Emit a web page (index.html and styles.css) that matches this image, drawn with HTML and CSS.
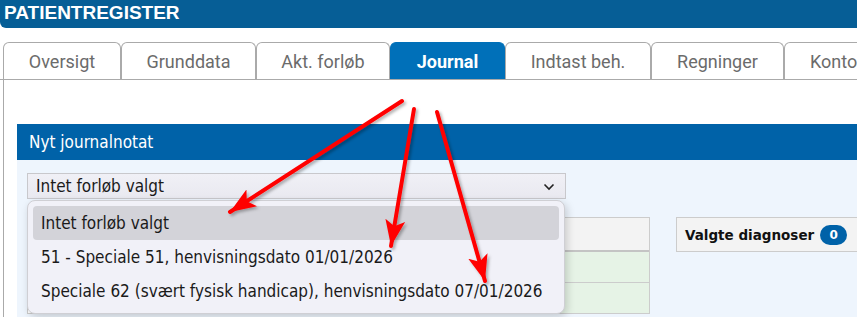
FILE: index.html
```html
<!DOCTYPE html>
<html lang="da">

<head>
    <meta charset="UTF-8">
    <meta name="viewport" content="width=device-width, initial-scale=1.0">
    <title>Patientregister</title>
    <link rel="stylesheet" href="styles.css">
</head>

<body>
    <header class="topbar">PATIENTREGISTER</header>

    <nav class="tabs">
        <div class="tab tab-oversigt">Oversigt</div>
        <div class="tab tab-grunddata">Grunddata</div>
        <div class="tab tab-forloeb">Akt. forløb</div>
        <div class="tab tab-journal active">Journal</div>
        <div class="tab tab-indtast">Indtast beh.</div>
        <div class="tab tab-regninger">Regninger</div>
        <div class="tab tab-konto">Konto</div>
    </nav>

    <main class="content">
        <section class="panel">
            <div class="panel-head">Nyt journalnotat</div>
            <div class="panel-body">
                <div class="select-wrap">
                    <div class="select">
                        <span>Intet forløb valgt</span>
                        <svg class="chevron" width="12" height="8" viewBox="0 0 12 8">
                            <path d="M1.5 1.5 L6 6 L10.5 1.5" fill="none" stroke="#222" stroke-width="1.6" />
                        </svg>
                    </div>
                    <ul class="options">
                        <li class="selected">Intet forløb valgt</li>
                        <li>51 - Speciale 51, henvisningsdato 01/01/2026</li>
                        <li>Speciale 62 (svært fysisk handicap), henvisningsdato 07/01/2026</li>
                    </ul>
                </div>

                <div class="lower">
                    <div class="grid">
                        <div class="grid-head"></div>
                        <div class="grid-row"></div>
                        <div class="grid-row"></div>
                    </div>
                    <div class="diagnoses">
                        Valgte diagnoser <span class="badge">0</span>
                    </div>
                </div>
            </div>
        </section>
    </main>

    <!-- annotation arrows drawn over the screenshot -->
    <svg class="arrows" width="857" height="317" viewBox="0 0 857 317">
        <defs>
            <marker id="head" markerUnits="userSpaceOnUse" markerWidth="28" markerHeight="22" refX="26" refY="11"
                orient="auto">
                <path d="M0 1 L26 11 L0 21 L6 11 Z" fill="#ff0000" />
            </marker>
            <filter id="shade" x="-20%" y="-20%" width="140%" height="140%">
                <feDropShadow dx="2" dy="2" stdDeviation="1.5" flood-color="#000" flood-opacity="0.3" />
            </filter>
        </defs>
        <g filter="url(#shade)" stroke="#ff0000" stroke-width="4" stroke-linecap="round">
            <line x1="402" y1="101" x2="230" y2="212" marker-end="url(#head)" />
            <line x1="414" y1="109" x2="391" y2="246" marker-end="url(#head)" />
            <line x1="437" y1="112" x2="485" y2="281" marker-end="url(#head)" />
        </g>
    </svg>
</body>

</html>
```

FILE: styles.css
```css
* {
    margin: 0;
    padding: 0;
    box-sizing: border-box;
}

body {
    width: 857px;
    height: 317px;
    overflow: hidden;
    background-color: #fff;
    font-family: "DejaVu Sans Condensed", "DejaVu Sans", sans-serif;
    position: relative;
}

/* Top title bar */
.topbar {
    height: 28px;
    background-color: #065e96;
    color: #fff;
    font-family: "Liberation Sans", Arial, sans-serif;
    font-weight: 700;
    font-size: 19px;
    line-height: 26px;
    padding-left: 4px;
    border-bottom-left-radius: 6px;
}

/* Tabs */
.tabs {
    display: flex;
    margin-top: 14px;
    padding-left: 3px;
    border-bottom: 1px solid #aaa;
    white-space: nowrap;
}

.tab {
    flex: none;
    height: 37px;
    border: 1px solid #aaa;
    border-bottom: none;
    border-radius: 6px 6px 0 0;
    background-color: #fff;
    color: #6b6b6b;
    font-family: Roboto, "Liberation Sans", sans-serif;
    font-size: 18px;
    display: flex;
    align-items: center;
    justify-content: center;
}

.tab-oversigt { width: 118px; }
.tab-grunddata { width: 135px; }
.tab-forloeb { width: 134px; }
.tab-journal { width: 115px; }
.tab-indtast { width: 146px; }
.tab-regninger { width: 133px; }
.tab-konto { width: 90px; justify-content: flex-start; padding-left: 25px; }

.tab.active {
    background-color: #0070b9;
    border-color: #0070b9;
    color: #fff;
    font-weight: 700;
}

/* Content area */
.content {
    margin-left: 3px;
    border-left: 1px solid #aaa;
    padding: 44px 0 0 13px;
    height: 237px;
}

.panel-head {
    height: 36px;
    background-color: #0062a8;
    color: #fff;
    font-size: 17px;
    line-height: 36px;
    padding-left: 12px;
}

.panel-body {
    background-color: #eef5fd;
    padding: 13px 10px 0;
    height: 157px;
    overflow: hidden;
}

.select-wrap {
    position: relative;
    width: 539px;
}

.select {
    height: 26px;
    border: 1px solid #c8c8cc;
    background: linear-gradient(#f0f0f6, #e9e9f0);
    color: #1a1a1a;
    font-size: 17px;
    padding: 0 10px 0 8px;
    display: flex;
    align-items: center;
    justify-content: space-between;
}

.chevron {
    margin-top: 1px;
}

/* Open dropdown list */
.options {
    position: absolute;
    top: 27px;
    left: 0;
    width: 538px;
    z-index: 5;
    list-style: none;
    padding: 5px;
    background-color: #f1f1f8;
    border: 1px solid #cfcfd4;
    border-radius: 8px;
    box-shadow: 2px 3px 8px rgba(0, 0, 0, 0.18);
}

.options li {
    height: 34px;
    line-height: 34px;
    padding-left: 8px;
    font-size: 17px;
    color: #1a1a1a;
    border-radius: 4px;
    white-space: nowrap;
}

.options li.selected {
    background-color: #d3d3d9;
}

/* Table and diagnoses under the list */
.lower {
    display: flex;
    align-items: flex-start;
    gap: 26px;
    margin-top: 18px;
}

.grid {
    width: 623px;
    flex: none;
    border-left: 1px solid #ccc;
    border-right: 1px solid #ccc;
}

.grid-head {
    height: 35px;
    background-color: #f3f3f3;
    border-top: 1px solid #ccc;
    border-bottom: 2px solid #c4c4c4;
}

.grid-row {
    height: 31px;
    background: linear-gradient(90deg, #fff 0%, #e6f3e6 45%, #e6f3e6 100%);
    border-bottom: 1px solid #ccc;
}

.diagnoses {
    flex: none;
    width: 200px;
    height: 35px;
    background-color: #f3f3f3;
    border: 1px solid #ccc;
    padding-left: 8px;
    display: flex;
    align-items: center;
    gap: 6px;
    font-family: "DejaVu Sans", sans-serif;
    font-weight: 700;
    font-size: 13.5px;
    color: #111;
}

.badge {
    display: inline-block;
    width: 27px;
    height: 20px;
    line-height: 20px;
    border-radius: 10px;
    background-color: #0062a8;
    color: #fff;
    text-align: center;
    font-size: 12px;
}

/* Annotation overlay */
.arrows {
    position: absolute;
    left: 0;
    top: 0;
    pointer-events: none;
    z-index: 10;
}
```
